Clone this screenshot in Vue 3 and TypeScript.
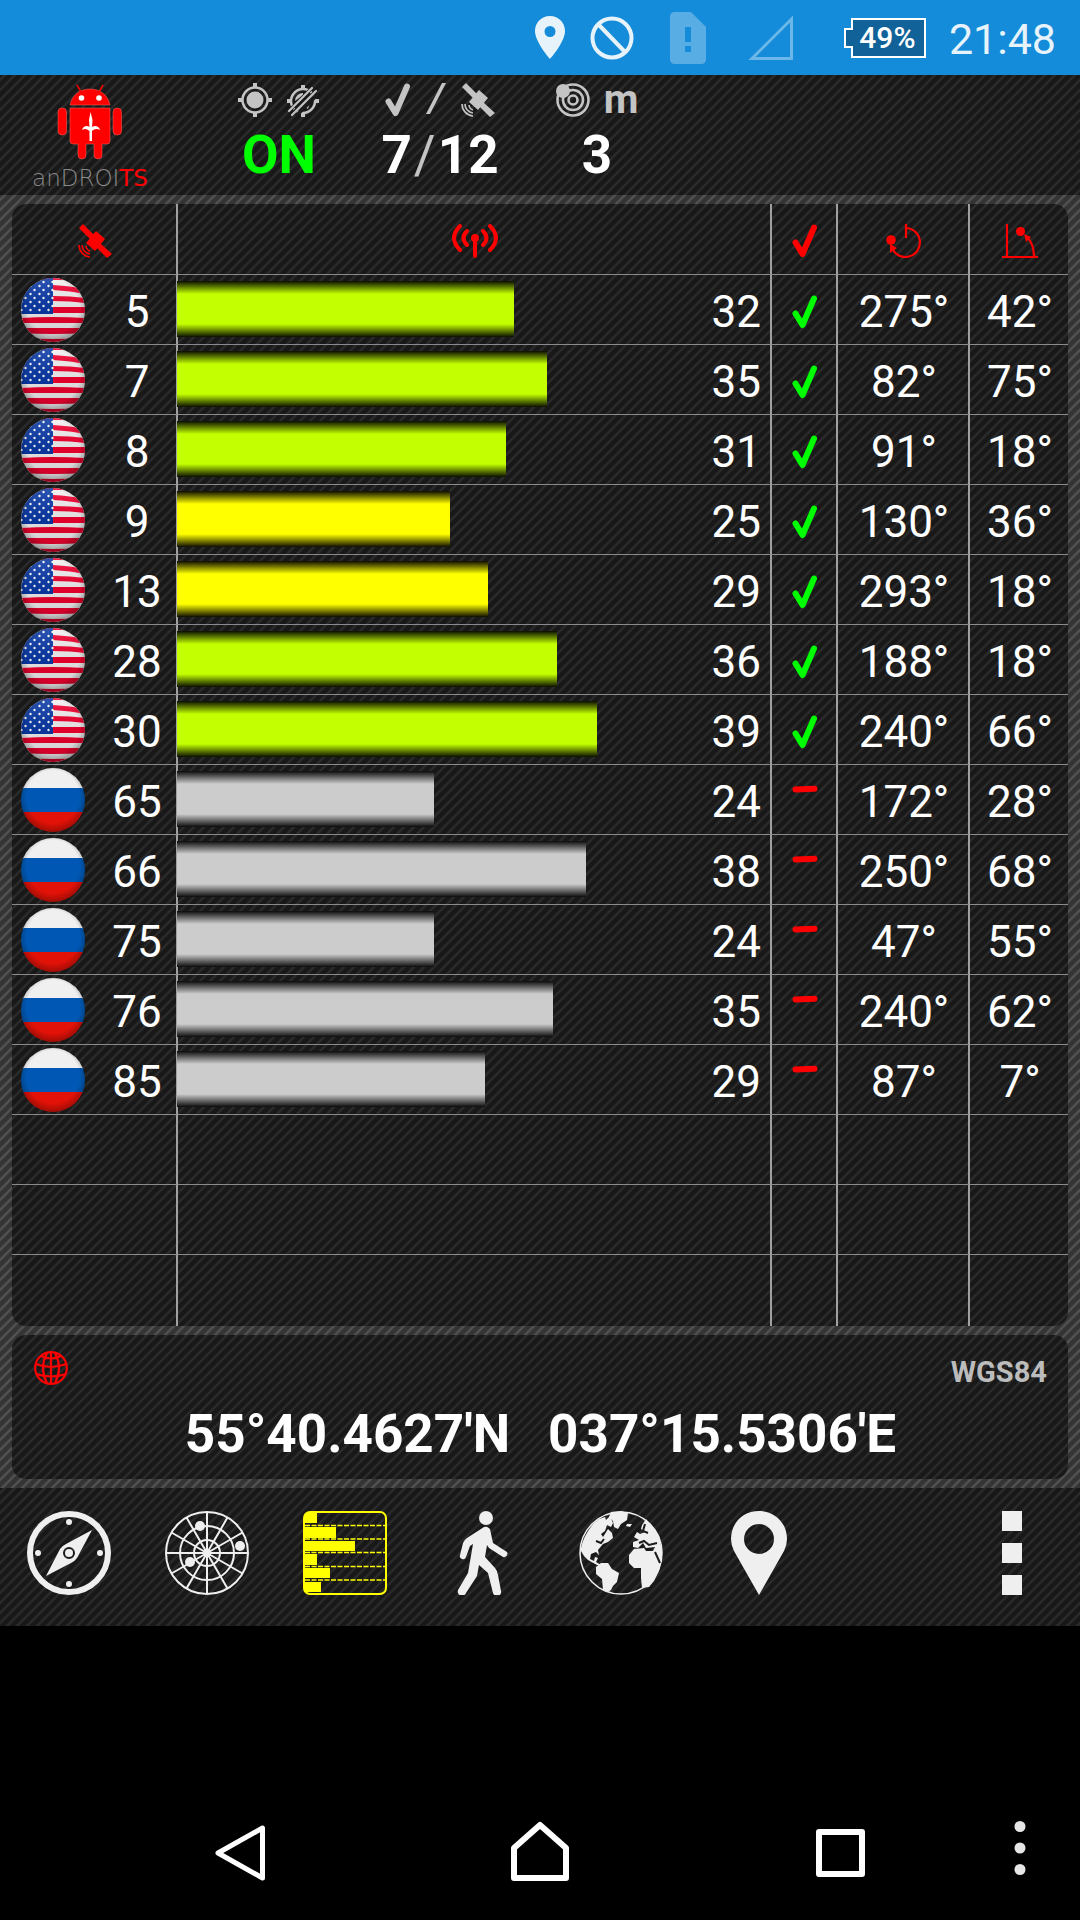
<script setup lang="ts">
interface Satellite {
  id: number
  country: 'us' | 'ru'
  snr: number
  level: number
  tone: 'strong' | 'medium' | 'idle'
  azimuth: number
  elevation: number
}

const satellites: Satellite[] = [
  { id: 5, country: 'us', snr: 32, level: 57, tone: 'strong', azimuth: 275, elevation: 42 },
  { id: 7, country: 'us', snr: 35, level: 62.5, tone: 'strong', azimuth: 82, elevation: 75 },
  { id: 8, country: 'us', snr: 31, level: 55.6, tone: 'strong', azimuth: 91, elevation: 18 },
  { id: 9, country: 'us', snr: 25, level: 46.1, tone: 'medium', azimuth: 130, elevation: 36 },
  { id: 13, country: 'us', snr: 29, level: 52.6, tone: 'medium', azimuth: 293, elevation: 18 },
  { id: 28, country: 'us', snr: 36, level: 64.2, tone: 'strong', azimuth: 188, elevation: 18 },
  { id: 30, country: 'us', snr: 39, level: 71, tone: 'strong', azimuth: 240, elevation: 66 },
  { id: 65, country: 'ru', snr: 24, level: 43.4, tone: 'idle', azimuth: 172, elevation: 28 },
  { id: 66, country: 'ru', snr: 38, level: 69.1, tone: 'idle', azimuth: 250, elevation: 68 },
  { id: 75, country: 'ru', snr: 24, level: 43.4, tone: 'idle', azimuth: 47, elevation: 55 },
  { id: 76, country: 'ru', snr: 35, level: 63.5, tone: 'idle', azimuth: 240, elevation: 62 },
  { id: 85, country: 'ru', snr: 29, level: 52, tone: 'idle', azimuth: 87, elevation: 7 },
]

const emptyRows = 3

// Staggered star grid of the flag canton
const stars: { x: number; y: number }[] = []
for (let row = 0; row < 8; row++) {
  for (let col = 0; col < 4; col++) {
    stars.push({ x: (row % 2 ? 0 : 4) + col * 9 + 0.5, y: 4 + row * 4 })
  }
}

const spokes = [0, 30, 60, 90, 120, 150]
</script>

<template>
  <div class="screen">
    <svg class="defs" width="0" height="0" aria-hidden="true">
      <defs>
        <clipPath id="disc"><circle cx="32" cy="32" r="32" /></clipPath>
        <radialGradient id="shade" cx="50%" cy="45%" r="55%">
          <stop offset="0.75" stop-color="#000" stop-opacity="0" />
          <stop offset="1" stop-color="#000" stop-opacity="0.3" />
        </radialGradient>
        <linearGradient id="fall" x1="0" y1="0" x2="0" y2="1">
          <stop offset="0" stop-color="#fff" stop-opacity="0.15" />
          <stop offset="0.5" stop-color="#000" stop-opacity="0.08" />
          <stop offset="1" stop-color="#000" stop-opacity="0.16" />
        </linearGradient>
        <symbol id="flag-us" viewBox="0 0 64 64">
          <g clip-path="url(#disc)">
            <rect width="64" height="64" fill="#f4f2f2" />
            <path
              fill="#f3002f"
              d="M0 0H64V2H0ZM32 7Q50 8 64 11V16Q50 13 32 12ZM32 18Q50 18 64 20V25Q50 23 32 23ZM32 29H64V35H32ZM0 40Q32 38 64 40V45Q32 45 0 45ZM0 50Q32 50 64 50V55Q32 57 0 55ZM0 60Q32 62 64 60V64H0Z"
            />
            <rect width="32" height="36" fill="#0a3aa8" />
            <circle v-for="(s, i) in stars" :key="i" :cx="s.x" :cy="s.y" r="1.2" fill="#fff" />
            <rect width="64" height="64" fill="url(#fall)" />
            <rect width="64" height="64" fill="url(#shade)" />
          </g>
        </symbol>
        <symbol id="flag-ru" viewBox="0 0 64 64">
          <g clip-path="url(#disc)">
            <rect width="64" height="21" fill="#f0f0f0" />
            <rect y="20" width="64" height="25" fill="#0058b4" />
            <rect y="44" width="64" height="20" fill="#e31208" />
            <rect width="64" height="64" fill="url(#shade)" />
          </g>
        </symbol>
        <symbol id="check" viewBox="0 0 26 34">
          <path d="M3.5 18.5L10.5 30L22 3.5" fill="none" stroke="currentColor" stroke-width="6" stroke-linecap="round" stroke-linejoin="round" />
        </symbol>
        <symbol id="dash" viewBox="0 0 26 34">
          <path d="M3.5 4.4L22.5 3.8" fill="none" stroke="currentColor" stroke-width="6" stroke-linecap="round" />
        </symbol>
        <symbol id="satellite" viewBox="0 0 34 34">
          <g fill="currentColor">
            <path d="M5 0L16 11L12 15L1 4ZM22 19L34 30L29 34L18 23Z" />
            <path d="M18 7L27 15L17 27L8 19Z" />
          </g>
          <g fill="none" stroke="currentColor" stroke-width="1.6">
            <path d="M8 22A6 6 0 0 0 12 27M4 21A9 9 0 0 0 12 30M1 21A12 12 0 0 0 12 33" />
          </g>
        </symbol>
      </defs>
    </svg>

    <header class="status">
      <svg class="status-pin" viewBox="0 0 30 44" aria-label="Location">
        <path fill="#e7f3fb" fill-rule="evenodd" d="M15 0C6 0 0 7 0 15C0 26 15 43 15 43S30 26 30 15C30 7 24 0 15 0ZM15 10A5.5 5.5 0 1 1 15 21A5.5 5.5 0 1 1 15 10Z" />
      </svg>
      <svg class="status-block" viewBox="0 0 44 44" aria-label="Do not disturb">
        <g fill="none" stroke="#e7f3fb" stroke-width="4"><circle cx="22" cy="22" r="19.5" /><path d="M8 8L35 36" /></g>
      </svg>
      <svg class="status-sim" viewBox="0 0 36 52" aria-label="No SIM">
        <path fill="#59ade5" d="M5 0H21L36 15V47Q36 52 31 52H5Q0 52 0 47V5Q0 0 5 0Z" />
        <path fill="#148cda" d="M15 15H21V30H15ZM15 34H21V40H15Z" />
      </svg>
      <svg class="status-signal" viewBox="0 0 46 46" aria-label="No signal">
        <path fill="none" stroke="#6cb6e8" stroke-width="3" d="M43.5 4V43.5H4Z" />
      </svg>
      <div class="battery">
        <svg class="battery-shape" viewBox="0 0 82 40" aria-hidden="true">
          <path fill="#106299" stroke="#fff" stroke-width="2" d="M8 1H81V39H8V29H1V11H8Z" />
        </svg>
        <span>49%</span>
      </div>
      <time class="clock">21:48</time>
    </header>

    <section class="summary texture">
      <div class="logo">
        <svg class="logo-bot" viewBox="0 0 66 76" aria-hidden="true">
          <g fill="#f00" stroke="#ff6b60" stroke-width="0.5">
            <path d="M13 21C15 11 23 5 33 5S51 11 53 21Z" />
            <path d="M13 24H53V57Q53 60 50 60H45V71A4 4 0 0 1 37 71V60H29V71A4 4 0 0 1 21 71V60H16Q13 60 13 57Z" />
            <rect x="1" y="24" width="8.5" height="27" rx="4" />
            <rect x="56" y="24" width="8.5" height="27" rx="4" />
          </g>
          <path d="M20 1L24 8M46 1L42 8" stroke="#e00" stroke-width="1.6" />
          <circle cx="24.5" cy="14" r="2.8" fill="#fff" />
          <circle cx="42" cy="14" r="2.8" fill="#fff" />
          <path fill="#fff" d="M33.5 28L35.5 36L35 43C38 41 42 42 43 46C40 44 37 45 35 47V57H32.5V47C30 45 28 44 25 46C26 42 30 41 32.5 43L32 36Z" />
        </svg>
        <div class="wordmark">anDROI<b>TS</b></div>
      </div>
      <div class="stat gps">
        <div class="stat-icons">
          <svg width="34" height="34" viewBox="0 0 34 34" aria-label="GPS on">
            <circle cx="17" cy="17" r="12.5" fill="none" stroke="currentColor" stroke-width="2.5" />
            <circle cx="17" cy="17" r="8.5" fill="currentColor" />
            <path d="M17 0V5M17 29V34M0 17H5M29 17H34" stroke="currentColor" stroke-width="4" />
          </svg>
          <svg width="34" height="34" viewBox="0 0 34 34" aria-label="GPS off">
            <circle cx="17" cy="18" r="12" fill="none" stroke="currentColor" stroke-width="2.5" />
            <path d="M17 2V7M17 29V34M1 18H6M28 18H33" stroke="currentColor" stroke-width="4" />
            <path d="M17 10A8 8 0 0 0 9 18L17 12ZM19 24L25 17L22 26Z" fill="currentColor" />
            <path d="M3 28L26 5M7 30L30 8M10 33L32 11" stroke="#1b1b1b" stroke-width="3.5" />
            <path d="M3 28L26 5M6 32L30 8" stroke="currentColor" stroke-width="2.2" stroke-linecap="round" />
          </svg>
        </div>
        <div class="stat-value on">ON</div>
      </div>
      <div class="stat">
        <div class="stat-icons">
          <svg width="26" height="34"><use href="#check" /></svg>
          <svg width="22" height="34" viewBox="0 0 22 34"><path fill="currentColor" d="M17 0H21L5 31H1Z" /></svg>
          <svg width="34" height="34"><use href="#satellite" /></svg>
        </div>
        <div class="stat-value">7<span class="slash">/</span>12</div>
      </div>
      <div class="stat accuracy">
        <div class="stat-icons">
          <svg width="34" height="34" viewBox="0 0 34 34" aria-label="Accuracy">
            <g fill="none" stroke="currentColor" stroke-width="2.6">
              <circle cx="17" cy="17" r="15.5" /><circle cx="17" cy="17" r="10" /><circle cx="17" cy="17" r="4.5" />
            </g>
            <circle cx="7" cy="8" r="7" fill="currentColor" />
          </svg>
          <span class="unit">m</span>
        </div>
        <div class="stat-value">3</div>
      </div>
    </section>

    <main class="frame">
      <section class="panel texture">
        <table class="grid">
          <colgroup>
            <col class="col-id" />
            <col />
            <col class="col-use" />
            <col class="col-az" />
            <col class="col-el" />
          </colgroup>
          <thead>
            <tr>
              <th scope="col" aria-label="Satellite"><svg width="34" height="34"><use href="#satellite" /></svg></th>
              <th scope="col" aria-label="Signal">
                <svg width="46" height="34" viewBox="0 0 46 34">
                  <g fill="none" stroke="currentColor" stroke-width="4" stroke-linecap="round">
                    <path d="M8 2Q-4 14 8 26M38 2Q50 14 38 26" />
                    <path d="M15 7Q8 14 15 21M31 7Q38 14 31 21M23 16V32" />
                  </g>
                  <circle cx="23" cy="14" r="4" fill="currentColor" />
                </svg>
              </th>
              <th scope="col" aria-label="Used in fix"><svg width="26" height="34"><use href="#check" /></svg></th>
              <th scope="col" aria-label="Azimuth">
                <svg width="36" height="34" viewBox="0 0 36 34">
                  <path d="M20 0V14M20 4A14.5 14.5 0 1 1 6 24" fill="none" stroke="currentColor" stroke-width="2.2" />
                  <path d="M4 20L11 24L4 29Z" fill="currentColor" />
                  <circle cx="5" cy="16" r="4.8" fill="currentColor" />
                </svg>
              </th>
              <th scope="col" aria-label="Elevation">
                <svg width="36" height="34" viewBox="0 0 36 34">
                  <path d="M5 0V33M0 33H36M32 33Q32 20 25 13" fill="none" stroke="currentColor" stroke-width="2.2" />
                  <path d="M22 10L29 13L24 18Z" fill="currentColor" />
                  <circle cx="18.5" cy="7.5" r="4.5" fill="currentColor" />
                </svg>
              </th>
            </tr>
          </thead>
          <tbody>
            <tr v-for="s in satellites" :key="s.id">
              <td>
                <div class="ident">
                  <svg class="flag" width="64" height="64"><use :href="'#flag-' + s.country" /></svg>
                  <span>{{ s.id }}</span>
                </div>
              </td>
              <td>
                <div class="signal">
                  <div class="bar" :class="s.tone" :style="{ width: s.level + '%' }"></div>
                  <span>{{ s.snr }}</span>
                </div>
              </td>
              <td>
                <svg class="mark" :class="s.country" width="26" height="34"><use :href="s.country === 'us' ? '#check' : '#dash'" /></svg>
              </td>
              <td>{{ s.azimuth }}°</td>
              <td>{{ s.elevation }}°</td>
            </tr>
            <tr v-for="n in emptyRows" :key="'empty' + n">
              <td></td>
              <td></td>
              <td></td>
              <td></td>
              <td></td>
            </tr>
          </tbody>
        </table>
      </section>

      <section class="panel texture position">
        <div class="position-head">
          <svg width="34" height="34" viewBox="0 0 34 34" aria-hidden="true">
            <g fill="none" stroke="#f00" stroke-width="2.2">
              <circle cx="17" cy="17" r="15.8" />
              <path d="M17 1V33M13 2Q5 17 13 32M21 2Q29 17 21 32M7 5Q17 10 27 5M2 13Q17 19 32 13M2 23Q17 28 32 23" />
            </g>
          </svg>
          <span>WGS84</span>
        </div>
        <div class="coords"><span>55°40.4627'N</span><span>037°15.5306'E</span></div>
      </section>
    </main>

    <nav class="toolbar texture">
      <button type="button" aria-label="Compass">
        <svg width="84" height="84" viewBox="0 0 84 84">
          <circle cx="42" cy="42" r="39" fill="none" stroke="currentColor" stroke-width="6" />
          <path fill="currentColor" fill-rule="evenodd" d="M65 19L50 47Q48 50 44 52L19 65L33 38Q35 35 39 33ZM42 36A6 6 0 1 0 42 48A6 6 0 1 0 42 36Z" />
          <circle cx="42" cy="42" r="4" fill="currentColor" />
          <g fill="currentColor"><circle cx="42" cy="11" r="3" /><circle cx="42" cy="73" r="3" /><circle cx="11" cy="42" r="3" /><circle cx="73" cy="42" r="3" /></g>
        </svg>
      </button>
      <button type="button" aria-label="Sky view">
        <svg width="84" height="84" viewBox="0 0 84 84">
          <g fill="none" stroke="currentColor" stroke-width="2">
            <circle cx="42" cy="42" r="41" /><circle cx="42" cy="42" r="27" /><circle cx="42" cy="42" r="13" />
            <path v-for="a in spokes" :key="a" d="M1 42H83" :transform="'rotate(' + a + ' 42 42)'" />
          </g>
          <g fill="currentColor"><circle cx="42" cy="42" r="4" /><circle cx="35" cy="15" r="5" /><circle cx="75" cy="35" r="5" /><circle cx="25" cy="51" r="5" /></g>
        </svg>
      </button>
      <button type="button" class="active" aria-label="Satellite list">
        <svg width="84" height="84" viewBox="0 0 84 84">
          <rect x="1" y="1" width="82" height="82" rx="6" fill="none" stroke="currentColor" stroke-width="2" />
          <path d="M2 14.5H82M2 28H82M2 41.5H82M2 55.5H82M2 69H82" stroke="currentColor" stroke-width="1.5" stroke-dasharray="5 1.5" />
          <path fill="currentColor" d="M2 2H14V12H2ZM2 16H33V27H2ZM2 30H52V40H2ZM2 43H14V54H2ZM2 57H27V67H2ZM2 71H18V81H2Z" />
        </svg>
      </button>
      <button type="button" aria-label="Movement">
        <svg width="84" height="84" viewBox="0 0 84 84">
          <circle cx="45" cy="7" r="7" fill="currentColor" />
          <path fill="currentColor" d="M43 16Q46 15 49 18L52 32L66 41A3.5 3.5 0 0 1 62 46L48 37L46 34L44 46L54 57Q56 59 57 64L60 80A4 4 0 0 1 52 82L47 62L38 54L36 65L25 82A4 4 0 0 1 17 79L27 62L32 33L29 35L25 46A3 3 0 0 1 19 44L22 32Q23 29 26 27Z" />
        </svg>
      </button>
      <button type="button" aria-label="Map">
        <svg width="84" height="84" viewBox="0 0 84 84">
          <circle cx="42" cy="42" r="41" fill="none" stroke="currentColor" stroke-width="1.5" />
          <g fill="currentColor">
            <path d="M1 44Q2 31 9 20L14 13L20 8L26 6L27 9L31 5L34 12L32 16L28 14L26 20L22 23L24 26L29 18L33 22L34 27L29 31L24 33L19 39L20 44L17 41L12 43L11 48L15 50L16 46L19 47L17 51L22 54L18 54L9 49L5 45L2 40Z" />
            <path d="M17 56L22 52L29 52L33 58L40 62L38 71L34 75L32 79L29 81L24 79L23 68L17 63Z" />
            <path d="M32 1L42 0L49 2L48 9L42 13L39 18L35 16L34 10L30 6ZM48 13L53 13L51 16L47 15Z" />
            <path d="M67 8L75 17L80 25L83 40L83 48L80 60L75 70L70 76L63 77L62 67L62 57L55 57L50 52L50 44L55 38L65 37L67 40L74 40L76 36L67 37L64 32L59 37L54 36L54 31L60 29L55 26L58 21L61 23L66 21L62 18L63 14Z" />
          </g>
          <path d="M60 32L65 30L70 34L78 32M76 41L81 52M66 13L64 20L69 22M25 28L22 32L17 30" fill="none" stroke="#1b1b1b" stroke-width="2" />
        </svg>
      </button>
      <button type="button" aria-label="Locations">
        <svg width="84" height="84" viewBox="0 0 84 84">
          <path fill="currentColor" fill-rule="evenodd" d="M42 0C26 0 14 12 14 28Q14 34 17 40L42 84L67 40Q70 34 70 28C70 12 58 0 42 0ZM42 13A15 15 0 1 1 42 43A15 15 0 1 1 42 13Z" />
        </svg>
      </button>
      <button type="button" class="overflow" aria-label="Menu">
        <svg width="84" height="84" viewBox="0 0 84 84">
          <path fill="currentColor" d="M33 0H53V20H33ZM33 32H53V52H33ZM33 64H53V84H33Z" />
        </svg>
      </button>
    </nav>

    <nav class="system">
      <button type="button" aria-label="Back">
        <svg width="64" height="72" viewBox="0 0 64 72"><path fill="none" stroke="#fff" stroke-width="5" stroke-linejoin="round" d="M54.5 16V66L10 41Z" /></svg>
      </button>
      <button type="button" aria-label="Home">
        <svg width="64" height="72" viewBox="0 0 64 72"><path fill="none" stroke="#fff" stroke-width="6" stroke-linejoin="round" d="M32 13L58 36V66H6V36Z" /></svg>
      </button>
      <button type="button" aria-label="Recent apps">
        <svg width="64" height="72" viewBox="0 0 64 72"><rect x="11" y="20" width="43" height="42" fill="none" stroke="#fff" stroke-width="6" stroke-linejoin="round" /></svg>
      </button>
      <button type="button" class="more" aria-label="More options">
        <svg width="12" height="72" viewBox="0 0 12 72"><g fill="#e6e6e6"><circle cx="6" cy="14.5" r="5.5" /><circle cx="6" cy="36" r="5.5" /><circle cx="6" cy="57.5" r="5.5" /></g></svg>
      </button>
    </nav>
  </div>
</template>

<style>
body {
  margin: 0;
  background: #000;
}
</style>

<style scoped>
.screen {
  display: flex;
  flex-direction: column;
  min-height: 100vh;
  background: #000;
  color: #fff;
  font-family: Roboto, "Liberation Sans", sans-serif;
}

svg {
  display: block;
  flex: none;
}

.defs {
  position: absolute;
}

button {
  display: flex;
  align-items: center;
  justify-content: center;
  padding: 0;
  border: 0;
  background: none;
  color: inherit;
  font: inherit;
}

.texture,
.frame {
  --base: #181818;
  --line: #2e2e2e;
  background: linear-gradient(135deg, var(--base) 10%, var(--line) 25%, var(--base) 40%, var(--base) 60%, var(--line) 75%, var(--base) 90%) 0 0 / 10px 10px;
}

/* Status bar */
.status {
  display: flex;
  align-items: center;
  justify-content: flex-end;
  height: 75px;
  padding-right: 24px;
  background: #148cda;
}

.status-pin {
  width: 30px;
  height: 44px;
  margin-right: 25px;
}

.status-block {
  width: 44px;
  height: 44px;
  margin-right: 36px;
}

.status-sim {
  width: 36px;
  height: 52px;
  margin-right: 42px;
}

.status-signal {
  width: 46px;
  height: 46px;
  margin-right: 50px;
}

.battery {
  display: grid;
  place-items: center;
  width: 82px;
  margin-right: 23px;
}

.battery > * {
  grid-area: 1 / 1;
}

.battery-shape {
  width: 82px;
  height: 40px;
}

.battery span {
  padding-left: 5px;
  font-size: 30px;
  line-height: 40px;
  font-weight: 500;
}

.clock {
  padding-top: 2px;
  color: #e7f3fb;
  font-size: 43px;
  line-height: 48px;
}

/* Fix summary */
.summary {
  display: flex;
  height: 120px;
  color: #c4c4c4;
}

.logo {
  display: flex;
  flex-direction: column;
  align-items: center;
  width: 180px;
  padding: 9px 18px 0 0;
  box-sizing: border-box;
  padding-right: 0;
  margin-right: 18px;
}

.logo-bot {
  width: 66px;
  height: 76px;
}

.wordmark {
  margin-top: 6px;
  color: #8a8a8a;
  font-family: "DejaVu Sans", sans-serif;
  font-size: 23px;
  line-height: 24px;
  font-weight: 200;
}

.wordmark b {
  color: #f00;
  font-weight: 400;
}

.stat {
  display: flex;
  flex-direction: column;
  align-items: center;
  width: 160px;
  padding-top: 8px;
}

.stat.gps {
  width: 162px;
}

.stat.accuracy {
  width: 154px;
}

.stat-icons {
  display: flex;
  align-items: center;
  gap: 14px;
  height: 34px;
}

.unit {
  font-size: 40px;
  line-height: 34px;
  font-weight: 700;
}

.stat-value {
  margin-top: 8px;
  color: #fff;
  font-size: 53px;
  line-height: 60px;
  font-weight: 700;
}

.stat-value.on {
  color: #0f0;
}

.slash {
  padding: 0 2px;
  color: #c4c4c4;
  font-weight: 400;
}

/* Panels */
.frame {
  --base: #343434;
  --line: #565656;
  display: flex;
  flex-direction: column;
  gap: 9px;
  padding: 9px 12px;
}

.panel {
  border-radius: 14px;
  overflow: hidden;
}

.grid {
  width: 100%;
  table-layout: fixed;
  border-collapse: separate;
  border-spacing: 0;
  font-size: 44px;
  line-height: 52px;
}

.col-id {
  width: 166px;
}

.col-use {
  width: 66px;
}

.col-az {
  width: 132px;
}

.col-el {
  width: 98px;
}

th,
td {
  box-sizing: border-box;
  height: 70px;
  padding: 4px 0 0 2px;
  border-right: 2px solid #a0a0a0;
  border-bottom: 1px solid #8a8a8a;
  text-align: center;
  vertical-align: middle;
}

th {
  height: 71px;
  color: #f00;
}

th svg,
.mark {
  margin: 0 auto;
}

th:last-child,
td:last-child {
  border-right: 0;
}

td:nth-child(1),
td:nth-child(2) {
  padding: 0;
}

tbody tr:last-child td {
  height: 71px;
  border-bottom: 0;
}

.ident {
  display: flex;
  align-items: center;
  padding-left: 9px;
}

.ident span {
  flex: 1;
  padding: 4px 0 0 13px;
}

.signal {
  display: flex;
  align-items: center;
  justify-content: space-between;
}

.signal span {
  padding: 4px 9px 0 0;
}

.bar {
  --tone: #c3ff00;
  height: 56px;
  margin: 6px 0 7px -1px;
  background: linear-gradient(rgba(0, 0, 0, 0.95) 0, transparent 13px, transparent 43px, rgba(0, 0, 0, 0.95) 56px), var(--tone);
}

.bar.medium {
  --tone: #ffff00;
}

.bar.idle {
  --tone: #cccccc;
}

.mark.us {
  color: #0f0;
}

.mark.ru {
  color: #f00;
}

/* Coordinates */
.position {
  box-sizing: border-box;
  height: 144px;
  padding: 16px 21px 0 22px;
}

.position-head {
  display: flex;
  align-items: flex-start;
  justify-content: space-between;
  color: #bcbcbc;
  font-size: 29px;
  line-height: 42px;
  font-weight: 700;
}

.coords {
  display: flex;
  justify-content: center;
  gap: 38px;
  margin-top: 11px;
  font-size: 53px;
  line-height: 60px;
  font-weight: 700;
}

/* Toolbar */
.toolbar {
  display: flex;
  height: 138px;
  color: #efefef;
}

.toolbar button {
  width: 138px;
  padding-bottom: 8px;
}

.toolbar .active {
  color: #ff0;
}

.toolbar .overflow {
  margin-left: auto;
}

/* System navigation */
.system {
  display: flex;
  height: 144px;
  margin-top: auto;
  padding: 0 30px 0 90px;
}

.system button {
  flex: 1;
}

.system .more {
  flex: none;
  width: 60px;
}
</style>
